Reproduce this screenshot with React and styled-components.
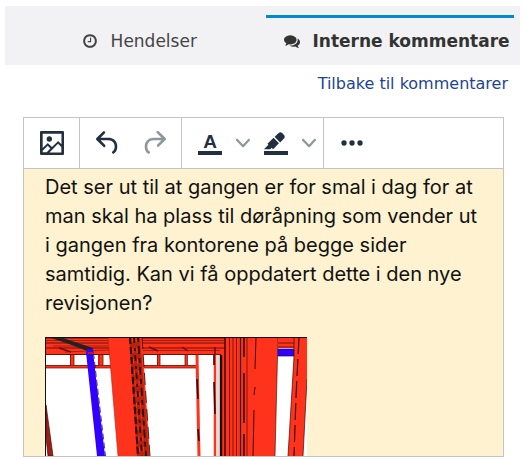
import React from "react";
import styled, { createGlobalStyle } from "styled-components";

const App = () => {
    return (
        <Page>
            <GlobalStyle />
            <Tabs>
                <Tab type="button">
                    <TabIcon path={CLOCK} />
                    Hendelser
                </Tab>
                <Tab type="button" $active aria-current="true">
                    <TabIcon path={COMMENTS} />
                    Interne kommentare
                </Tab>
            </Tabs>
            <BackRow>
                <BackLink href="#kommentarer">Tilbake til kommentarer</BackLink>
            </BackRow>
            <Editor>
                <Toolbar>
                    <Group>
                        <ToolButton type="button" aria-label="Bilde">
                            <ToolIcon path={IMAGE} />
                        </ToolButton>
                    </Group>
                    <Group>
                        <ToolButton type="button" aria-label="Angre">
                            <ToolIcon path={UNDO} />
                        </ToolButton>
                        <ToolButton type="button" aria-label="Gjenta" disabled>
                            <ToolIcon path={REDO} />
                        </ToolButton>
                    </Group>
                    <Group>
                        <ToolButton type="button" aria-label="Tekstfarge">
                            <ColorLetter>A</ColorLetter>
                        </ToolButton>
                        <ArrowButton type="button" aria-label="Velg tekstfarge">
                            <Chevron />
                        </ArrowButton>
                        <ToolButton type="button" aria-label="Bakgrunnsfarge">
                            <ToolIcon path={HIGHLIGHT} />
                        </ToolButton>
                        <ArrowButton type="button" aria-label="Velg bakgrunnsfarge">
                            <Chevron />
                        </ArrowButton>
                    </Group>
                    <Group>
                        <ToolButton type="button" aria-label="Mer">
                            <ToolIcon path={MORE} />
                        </ToolButton>
                    </Group>
                </Toolbar>
                <Content>
                    <Paragraph>
                        Det ser ut til at gangen er for smal i dag for at man skal ha plass til
                        døråpning som vender ut i gangen fra kontorene på begge sider samtidig. Kan
                        vi få oppdatert dette i den nye revisjonen?
                    </Paragraph>
                    <ModelView />
                </Content>
            </Editor>
        </Page>
    );
};

export default App;

const TabIcon = ({ path }) => (
    <svg width="16" height="16" viewBox="0 0 1792 1792" fill="currentColor" aria-hidden="true">
        <path d={path} />
    </svg>
);

const ToolIcon = ({ path }) => (
    <svg width="32" height="32" viewBox="0 0 24 24" fill="currentColor" aria-hidden="true">
        <path d={path} fillRule="evenodd" />
    </svg>
);

const Chevron = () => (
    <svg width="14" height="14" viewBox="0 0 10 10" fill="currentColor" aria-hidden="true">
        <path d="M8.7 2.2c.3-.3.8-.3 1 0 .4.4.4.9 0 1.2L5.7 7.8c-.3.3-.9.3-1.2 0L.2 3.4a.8.8 0 0 1 0-1.2c.3-.3.8-.3 1.1 0L5 6l3.7-3.8Z" />
    </svg>
);

// steel frame seen down the corridor
const ModelView = () => (
    <Drawing viewBox="0 0 262 119" aria-label="Modell av gangen" role="img">
        <rect width="262" height="119" fill="#fff" />
        <g fill="#ff331c">
            <rect width="182" height="18" />
            <rect y="28" width="152" height="3" />
            <rect x="25" y="17" width="4" height="12" />
            <rect x="53" y="17" width="5" height="12" />
            <rect x="112" y="17" width="3" height="12" />
            <rect x="140" y="17" width="2" height="12" />
        </g>
        <g stroke="#6b1108" fill="none">
            <path d="M0 1h182M0 6h182M0 11h182M0 17.5h176" strokeWidth="1.1" />
            <path d="M0 3.5h64M97 3.5h83M8 9h55M97 13.5h78M20 15l44-2" strokeWidth="0.6" />
            <path d="M1 28.5h66M1 31h67M98 28.5h53M98 31h53" strokeWidth="0.7" />
            <path d="M25.5 18v10M29 18v10M54 18v10M58 18v10M112.5 18v10M115 18v10M140 18v10M142.5 18v10" strokeWidth="0.8" />
            <path d="M14 11l12 4M104 10l9 4M137 10l6 4M170 10v8" strokeWidth="1.5" />
        </g>
        <path d="M3 0h12L48 11v3h-6L24 7z" fill="#25211f" />
        <path d="M41 15h7l12 104h-8z" fill="#3100ff" />
        <path d="M42 12h6l1 5h-8z" fill="#3100ff" />
        <path d="M48.5 16l12 103" stroke="#160a66" strokeWidth="0.8" strokeDasharray="6 3" />
        <path d="M43 16h6" stroke="#b51c0e" strokeWidth="2" />
        <path d="M1 68l7 51H3L1 100z" fill="#9b1f12" stroke="#4a0b05" strokeWidth="0.7" />
        <path d="M63 0h34l8 119H73z" fill="#ff331c" />
        <path d="M84 0h11l9 119H92z" fill="#b9210f" />
        <g stroke="#210604" fill="none">
            <path d="M85 0l8 119" strokeWidth="2" strokeDasharray="7 3" />
            <path d="M89 0l8 119" strokeWidth="1.6" strokeDasharray="6 5 3 4" />
            <path d="M93 0l8 119" strokeWidth="1.6" strokeDasharray="5 4 8 4" />
            <path d="M97 0l8 119" strokeWidth="0.8" strokeDasharray="12 6" />
        </g>
        <path d="M63 0l10 119" stroke="#b9210f" strokeWidth="0.6" />
        <path d="M87 0l8 119M91 0l8 119" stroke="#ff331c" strokeWidth="1" strokeDasharray="5 6" />
        <g stroke="#ff331c" fill="none">
            <path d="M152 18l2 101" strokeWidth="3" />
            <path d="M170 18v101" strokeWidth="2.5" />
        </g>
        <path d="M152 42l1 20M153 92l1 12M169 18v10M169 45l1 32" stroke="#3a0905" strokeWidth="1.6" />
        <path d="M173 18v101" stroke="#a9a9a9" strokeWidth="0.8" />
        <path d="M180 0h53l-3 119h-55V18h5z" fill="#ff331c" />
        <g stroke="#2b0704" fill="none">
            <path d="M176 18v101" strokeWidth="2.5" />
            <path d="M180 0v119" strokeWidth="1.4" />
            <path d="M184.5 0v119M188 0v119M191.5 0v119" strokeWidth="0.6" />
            <path d="M195.5 0v119" strokeWidth="1.2" />
            <path d="M199 0v20M199 36v50M199 97v22" strokeWidth="1.5" />
            <path d="M202 0v119" strokeWidth="0.6" />
            <path d="M211 0l-1 32M210 50l-1 8M209 73l-1 46" strokeWidth="0.9" />
            <path d="M233 0l-3 119" strokeWidth="0.6" />
        </g>
        <rect x="233" width="17" height="11" fill="#ff331c" />
        <path d="M233 .5h17M233 6h17M233 10h17" stroke="#6b1108" strokeWidth="0.9" />
        <rect x="233" y="12" width="16" height="7" fill="#3100ff" stroke="#160a66" strokeWidth="0.7" />
        <path d="M249 0h13v42l-4 77h-15l6-100z" fill="#ff331c" />
        <g stroke="#3a0905" fill="none">
            <path d="M249 0v20l-6 99" strokeWidth="0.7" />
            <path d="M254 0l-3 60-2 59" strokeWidth="1.2" strokeDasharray="17 5" />
            <path d="M262 42l-4 77" strokeWidth="0.7" />
        </g>
        <path d="M0 .5h262M.5 0v119" stroke="#111" strokeWidth="1" />
    </Drawing>
);

const GlobalStyle = createGlobalStyle`
    * {
        box-sizing: border-box;
    }

    body {
        margin: 0;
        background-color: #fff;
    }
`;

const Page = styled.main`
    padding: 6px 5px 2px;
    font-family: "DejaVu Sans", Verdana, sans-serif;
`;

const Tabs = styled.nav`
    display: grid;
    grid-template-columns: 1fr 1fr;
    padding: 9px 6px 0 12px;
    background-color: #f2f2f4;
`;

const Tab = styled.button`
    display: flex;
    align-items: center;
    justify-content: ${({ $active }) => ($active ? "flex-start" : "center")};
    gap: 13px;
    min-width: 0;
    height: 50px;
    padding: ${({ $active }) => ($active ? "0 0 2px 18px" : "0 4px 2px 0")};
    border: 0;
    border-top: 3px solid ${({ $active }) => ($active ? "#0088d1" : "transparent")};
    background: none;
    color: ${({ $active }) => ($active ? "#333" : "#444")};
    font-family: inherit;
    font-size: 17px;
    font-weight: ${({ $active }) => ($active ? 700 : 400)};
    white-space: nowrap;
    overflow: hidden;

    svg {
        flex: none;
    }
`;

const BackRow = styled.div`
    display: flex;
    justify-content: flex-end;
    padding: 9px 12px 0;
`;

const BackLink = styled.a`
    color: #1c4595;
    font-size: 16px;
    line-height: 20px;
    text-decoration: none;
`;

const Editor = styled.section`
    margin: 23px 16px 0 18px;
    border: 1px solid #c4c4c4;
`;

const Toolbar = styled.div`
    display: flex;
    height: 51px;
    border-bottom: 1px solid #c4c4c4;
    color: #222f3e;
`;

const Group = styled.div`
    display: flex;
    align-items: center;
    padding: 0 4px 0 5px;

    & + & {
        border-left: 1px solid #c4c4c4;
    }
`;

const ToolButton = styled.button`
    display: flex;
    align-items: center;
    justify-content: center;
    width: 46px;
    height: 46px;
    padding: 0;
    border: 0;
    background: none;
    color: inherit;

    &:disabled {
        opacity: 0.5;
    }
`;

const ArrowButton = styled(ToolButton)`
    width: 20px;
    color: #90979e;
`;

const ColorLetter = styled.span`
    width: 24px;
    border-bottom: 4px solid currentColor;
    font-family: "Liberation Sans", Arial, sans-serif;
    font-size: 19px;
    font-weight: 700;
    line-height: 19px;
`;

const Content = styled.div`
    height: 287px;
    padding: 4px 21px 0;
    overflow: hidden;
    background-color: #fef2d0;
`;

const Paragraph = styled.p`
    margin: 0 0 19px;
    color: #111;
    font-family: Inter, sans-serif;
    font-size: 20px;
    line-height: 29px;
`;

const Drawing = styled.svg`
    display: block;
    width: 262px;
    max-width: 100%;
`;

const CLOCK =
    "M1024 544v448q0 14-9 23t-23 9h-320q-14 0-23-9t-9-23v-64q0-14 9-23t23-9h224v-352q0-14 9-23t23-9h64q14 0 23 9t9 23zm416 352q0-148-73-273t-198-198-273-73-273 73-198 198-73 273 73 273 198 198 273 73 273-73 198-198 73-273zm224 0q0 209-103 385.5t-279.5 279.5-385.5 103-385.5-103-279.5-279.5-103-385.5 103-385.5 279.5-279.5 385.5-103 385.5 103 279.5 279.5 103 385.5z";

const COMMENTS =
    "M1408 768q0 139-94 257t-256.5 186.5-353.5 68.5q-86 0-176-16-124 88-278 128-36 9-86 16h-3q-11 0-20.5-8t-11.5-21q-1-3-1-6.5t.5-6.5 2-6l2.5-5 3.5-5.5 4-5 4.5-5 4-4.5q5-6 23-25t26-29.5 22.5-29 25-38.5 20.5-44q-124-72-195-177t-71-224q0-139 94-257t256.5-186.5 353.5-68.5 353.5 68.5 256.5 186.5 94 257zm384 256q0 120-71 224.5t-195 176.5q10 24 20.5 44t25 38.5 22.5 29 26 29.5 23 25q1 1 4 4.5t4.5 5 4 5 3.5 5.5l2.5 5 2 6 .5 6.5-1 6.5q-3 14-13 22t-22 7q-50-7-86-16-154-40-278-128-90 16-176 16-271 0-472-132 58 4 88 4 161 0 309-45t264-129q125-92 192-212t67-254q0-77-23-152 129 71 204 178t75 230z";

const IMAGE =
    "m5 15.7 3.3-3.2c.3-.3.7-.3 1 0L12 15l4.1-4c.3-.4.8-.4 1 0l2 1.9V5H5v10.7zM5 18V19h3l2.8-2.9-2-2L5 17.9zm14-3-2.5-2.4-6.4 6.5H19v-4zM4 3h16c.6 0 1 .4 1 1v16c0 .6-.4 1-1 1H4a1 1 0 0 1-1-1V4c0-.6.4-1 1-1zm6 8a2 2 0 1 0 0-4 2 2 0 0 0 0 4z";

const UNDO =
    "M6.4 8H12c3.7 0 6.2 2 6.8 5.1.6 2.7-.4 5.6-2.3 6.8a1 1 0 0 1-1-1.8c1.1-.6 1.8-2.7 1.4-4.6-.5-2.1-2.1-3.5-4.9-3.5H6.4l3.3 3.3a1 1 0 1 1-1.4 1.4l-5-5a1 1 0 0 1 0-1.4l5-5a1 1 0 0 1 1.4 1.4L6.4 8z";

const REDO =
    "M17.6 10H12c-2.8 0-4.4 1.4-4.9 3.5-.4 2 .3 4 1.4 4.6a1 1 0 1 1-1 1.8c-2-1.2-2.9-4.1-2.3-6.8.6-3 3-5.1 6.8-5.1h5.6l-3.3-3.3a1 1 0 1 1 1.4-1.4l5 5a1 1 0 0 1 0 1.4l-5 5a1 1 0 0 1-1.4-1.4l3.3-3.3z";

const HIGHLIGHT =
    "M3 18h18v3H3zM7.7 16.7H3l3.3-3.3-.7-.8L10.2 8l4 4.1-4 4.2c-.2.2-.6.2-.8 0l-.6-.7-1.1 1.1zm5-7.5L11 7.4l3-2.9a2 2 0 0 1 2.6 0L18 6c.7.7.7 2 0 2.7l-2.9 2.9-1.8-1.8-.5-.6";

const MORE =
    "M6 10a2 2 0 0 0-2 2c0 1.1.9 2 2 2a2 2 0 0 0 2-2 2 2 0 0 0-2-2zm12 0a2 2 0 0 0-2 2c0 1.1.9 2 2 2a2 2 0 0 0 2-2 2 2 0 0 0-2-2zm-6 0a2 2 0 0 0-2 2c0 1.1.9 2 2 2a2 2 0 0 0 2-2 2 2 0 0 0-2-2z";
